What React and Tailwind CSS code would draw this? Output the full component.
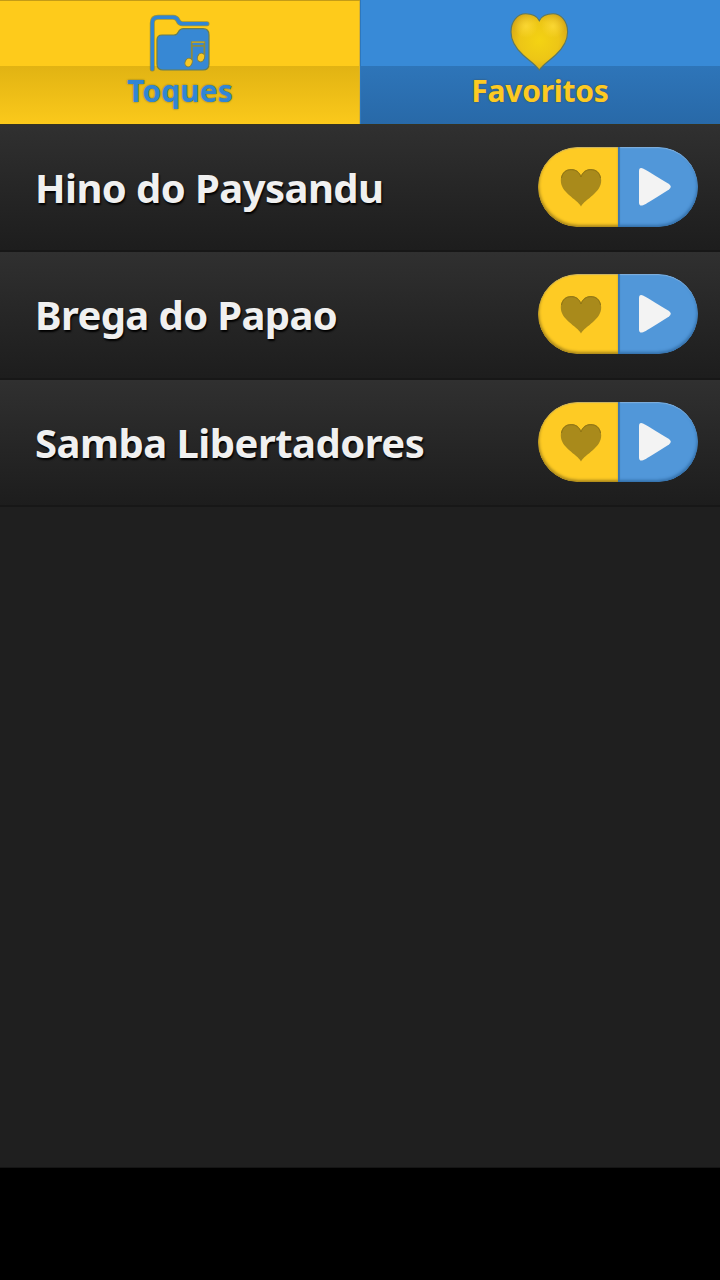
import React, { useState } from 'react';

const ringtones = [
    { id: 1, title: 'Hino do Paysandu', tracking: 'tracking-[-0.57px]' },
    { id: 2, title: 'Brega do Papao', tracking: 'tracking-[-0.62px]' },
    { id: 3, title: 'Samba Libertadores', tracking: 'tracking-[-0.52px]' },
];

const FolderIcon = () => (
    <svg width="62" height="60" viewBox="0 0 62 60" fill="none">
        <path
            d="M3.3 55V9Q3.3 3.3 9 3.3H24Q27.5 3.3 29 6.5Q30.3 9.7 33.5 9.7H58"
            stroke="#6f7a45"
            strokeOpacity="0.65"
            strokeWidth="5"
            strokeLinecap="round"
            strokeLinejoin="round"
        />
        <path
            d="M3.3 55V9Q3.3 3.3 9 3.3H24Q27.5 3.3 29 6.5Q30.3 9.7 33.5 9.7H58"
            stroke="#3186d4"
            strokeWidth="3.4"
            strokeLinecap="round"
            strokeLinejoin="round"
        />
        <path
            d="M13 21H25Q28 21 29.3 18Q31 14.7 34.5 14.7H54Q60 14.7 60 21V50Q60 56 54 56H14Q8 56 8 50V26Q8 21 13 21Z"
            fill="#3788d4"
            stroke="#687d52"
            strokeWidth="1.2"
        />
        <path d="M42.8 48V28.2H55.4V43M43 31.8H55.4" stroke="#8d8a3f" strokeWidth="1.8" />
        <path d="M42.8 28.2H55.4" stroke="#c9a92e" strokeWidth="1.2" />
        <ellipse cx="39.6" cy="48.5" rx="3.5" ry="4.4" transform="rotate(22 39.6 48.5)" fill="#f7c723" stroke="#777b42" strokeWidth="0.9" />
        <ellipse cx="52" cy="43.5" rx="3.5" ry="4.4" transform="rotate(22 52 43.5)" fill="#f7c723" stroke="#777b42" strokeWidth="0.9" />
    </svg>
);

const BigHeart = () => (
    <svg width="60" height="60" viewBox="0 0 60 60">
        <defs>
            <radialGradient id="heartFill" cx="0.5" cy="0.48" r="0.62">
                <stop offset="0" stopColor="#f4d313" />
                <stop offset="0.55" stopColor="#edc616" />
                <stop offset="1" stopColor="#cf9f19" />
            </radialGradient>
            <radialGradient id="heartShine">
                <stop offset="0" stopColor="#ffdc3c" stopOpacity="0.75" />
                <stop offset="1" stopColor="#ffdc3c" stopOpacity="0" />
            </radialGradient>
        </defs>
        <path
            d="M29.3 58C25.5 52.5 19 48.5 13 43C6 36.5 1 29.5 1 20C1 9 7.5 1.8 15.5 1.8C22 1.8 27 4 29.3 8.7C31.6 4 36.6 1.8 43.1 1.8C51.1 1.8 57.6 9 57.6 20C57.6 29.5 52.6 36.5 45.6 43C39.6 48.5 33.1 52.5 29.3 58Z"
            fill="url(#heartFill)"
            stroke="#5b7763"
            strokeWidth="1.1"
        />
        <circle cx="16" cy="14" r="12" fill="url(#heartShine)" />
        <circle cx="43" cy="14" r="12" fill="url(#heartShine)" />
    </svg>
);

const SmallHeart = () => (
    <svg width="42" height="40" viewBox="0 0 42 40">
        <path
            d="M21 38.5C19 34.5 14 31.5 9 27C4 22.5 0.8 18 0.8 12.5C0.8 5.5 5 1 11.3 1C15.5 1 19.5 3.5 21 8.3C22.5 3.5 26.5 1 30.7 1C37 1 41.2 5.5 41.2 12.5C41.2 18 38 22.5 33 27C28 31.5 23 34.5 21 38.5Z"
            fill="#a98a1b"
        />
        <path d="M1.5 10C2.5 4.5 6 1.7 11.3 1.7C15.5 1.7 19.5 4 21 9C22.5 4 26.5 1.7 30.7 1.7C36 1.7 39.5 4.5 40.5 10" fill="none" stroke="#8f7415" strokeWidth="1" />
    </svg>
);

const PlayIcon = () => (
    <svg width="34" height="40" viewBox="0 0 34 40">
        <path
            d="M1 4Q1 -0.2 5 1.4Q7 2.3 31 17Q34.6 19.8 31 22.4Q8 37 5 38.3Q1 39.5 1 35.5Z"
            fill="#f3f3f3"
        />
    </svg>
);

const RingtoneRow = ({ title, tracking }) => (
    <li className="h-[127.4px] flex items-start justify-between pl-[35px] pr-[22px] bg-linear-to-b from-[#303030] to-[#1d1d1d] border-b-2 border-[#171717]">
        <span className={`mt-[36px] text-[40px] leading-[54px] font-bold whitespace-nowrap text-[#f0f0f0] [text-shadow:1px_2px_2px_#000] ${tracking}`}>
            {title}
        </span>
        <div className="mt-[22px] w-[160px] h-[80px] flex rounded-full overflow-hidden">
            <button className="w-[80px] h-full flex justify-center pt-[21px] pl-[6px] rounded-l-full bg-[#fecb24] shadow-[inset_1px_-2px_3px_#a8861b,inset_0_1px_1px_#c9b46b]">
                <SmallHeart />
            </button>
            <button className="w-[80px] h-full flex pt-[20px] pl-[20px] rounded-r-full bg-[#5197d9] shadow-[inset_-1px_-2px_3px_#3571ab,inset_2px_0_1px_#3b78b5,inset_0_1px_1px_#8db9e2]">
                <PlayIcon />
            </button>
        </div>
    </li>
);

const App = () => {
    const [tab, setTab] = useState('toques');

    return (
        <div className="w-[720px] h-[1280px] flex flex-col bg-black font-['Noto_Sans','Open_Sans',sans-serif]">
            <main className="h-[1168px] flex flex-col bg-[#1f1f1f] border-b border-[#151515]">
                <nav className="h-[125px] shrink-0 flex border-b border-[#353322]">
                    <button
                        onClick={() => setTab('toques')}
                        aria-selected={tab === 'toques'}
                        className="w-[360px] h-full flex flex-col items-center pt-[13px] border-t border-t-[#c49c17] bg-[linear-gradient(#fecb1b_0_65px,#e1b313_65px,#fbc91b_123px)] shadow-[inset_-1px_0_0_#d6b333]"
                    >
                        <FolderIcon />
                        <span className="mt-[-1px] text-[30px] leading-[36px] font-bold text-[#3186d4] [text-shadow:0_0_2px_#5d6535]">Toques</span>
                    </button>
                    <button
                        onClick={() => setTab('favoritos')}
                        aria-selected={tab === 'favoritos'}
                        className="w-[360px] h-full flex flex-col items-center pt-[12px] bg-[linear-gradient(#388ad7_0_66px,#2e75b9_66px,#2869a8_124px)] shadow-[inset_1px_0_0_#2f77bb]"
                    >
                        <BigHeart />
                        <span className="mt-px text-[30px] leading-[36px] font-bold tracking-[-0.25px] text-[#fdca22] [text-shadow:0_0_2px_#3c4e50]">Favoritos</span>
                    </button>
                </nav>
                <ul>
                    {ringtones.map(tone => (
                        <RingtoneRow key={tone.id} title={tone.title} tracking={tone.tracking} />
                    ))}
                </ul>
            </main>
        </div>
    );
};

export default App;
